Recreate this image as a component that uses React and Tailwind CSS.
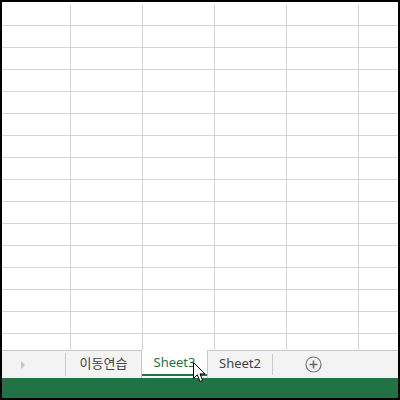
import React from "react";

const ROWS = Array.from({ length: 16 });
const COLS = [69, 72, 72, 72, 72, 41];

function PlusCircle() {
  return (
    <svg width="17" height="17" viewBox="0 0 17 17">
      <circle cx="8.5" cy="8.5" r="7.5" fill="none" stroke="#7a7a7a" strokeWidth="1.2" />
      <path d="M8.5 4.5v8M4.5 8.5h8" stroke="#6a6a6a" strokeWidth="1.6" />
    </svg>
  );
}

function Cursor() {
  return (
    <svg width="13" height="21" viewBox="0 0 13 21">
      <path
        d="M0.5 0.5 L0.5 16.5 L4.3 12.8 L7 19.5 L9.6 18.4 L7 11.9 L12 11.9 Z"
        fill="#ffffff"
        stroke="#000000"
        strokeWidth="1"
        strokeLinejoin="miter"
      />
    </svg>
  );
}

export default function App() {
  return (
    <div
      className="relative w-[400px] h-[400px] border-2 border-black bg-white flex flex-col overflow-hidden"
      style={{ fontFamily: '"Noto Sans", "Noto Sans CJK KR", sans-serif' }}
    >
      {/* GRID */}
      <div className="h-[348px] pt-[2px] overflow-hidden">
        {ROWS.map((_, r) => (
          <div key={r} className="flex h-[22px] border-b border-[#d4d4d4]">
            {COLS.map((w, c) => (
              <div
                key={c}
                style={{ width: w }}
                className={c < 5 ? "shrink-0 border-r border-[#d4d4d4]" : "shrink-0"}
              />
            ))}
          </div>
        ))}
      </div>

      {/* SHEET TABS */}
      <div className="h-[28px] flex items-stretch bg-[#f3f3f3] border-t border-[#c8c8c8] text-[13px] text-[#444]">
        <div className="w-[63px] flex items-center pl-[19px]">
          <span className="w-0 h-0 border-y-[4px] border-y-transparent border-l-[4px] border-l-[#c4c4c4]" />
        </div>
        <div className="w-px my-[2px] bg-[#c8c8c8]" />
        <div className="w-[75px] flex items-center justify-center pb-[2px]">이동연습</div>
        <div className="w-[67px] -mt-px flex flex-col bg-white border-x border-[#c8c8c8]">
          <div className="flex-1 flex items-center justify-center text-[#217346] pt-[1px]">Sheet3</div>
          <div className="h-[2px] mb-[2px] bg-[#217346]" />
        </div>
        <div className="w-[64px] flex items-center justify-center pb-[2px]">Sheet2</div>
        <div className="w-px my-[3px] bg-[#c8c8c8]" />
        <div className="flex items-center pl-[32px] pb-[1px]">
          <PlusCircle />
        </div>
      </div>

      {/* STATUS BAR */}
      <div className="h-[20px] bg-[#217346]" />

      <div className="absolute left-[191px] top-[360px]">
        <Cursor />
      </div>
    </div>
  );
}
